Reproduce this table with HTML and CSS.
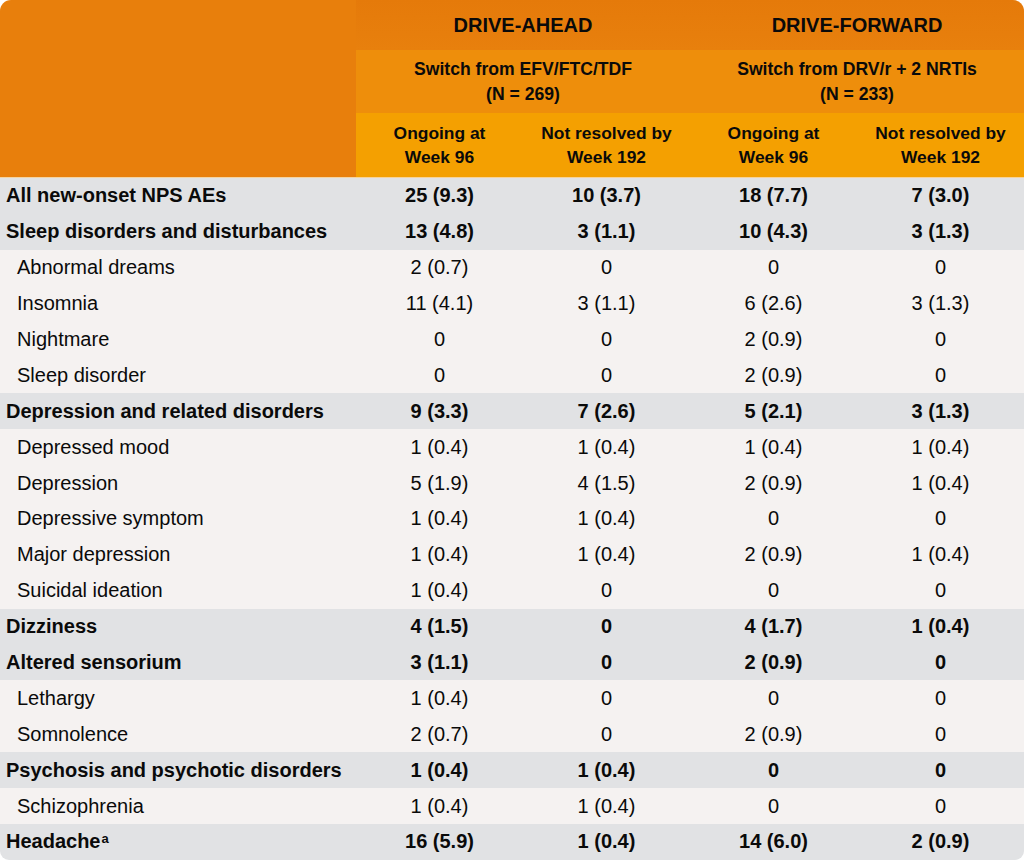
FILE: index.html
```html
<!DOCTYPE html>
<html lang="en">
<head>
<meta charset="utf-8">
<title>New-onset NPS AEs</title>
<link rel="stylesheet" href="styles.css">
</head>
<body>
<div class="wrap">
<table class="ae">
  <colgroup>
    <col class="c-label"><col class="c-num"><col class="c-num"><col class="c-num"><col class="c-num">
  </colgroup>
  <thead>
    <tr class="h1">
      <th class="corner" rowspan="3"></th>
      <th colspan="2">DRIVE-AHEAD</th>
      <th colspan="2">DRIVE-FORWARD</th>
    </tr>
    <tr class="h2">
      <th colspan="2">Switch from EFV/FTC/TDF<br>(N = 269)</th>
      <th colspan="2">Switch from DRV/r + 2 NRTIs<br>(N = 233)</th>
    </tr>
    <tr class="h3">
      <th>Ongoing at<br>Week 96</th>
      <th>Not resolved by<br>Week 192</th>
      <th>Ongoing at<br>Week 96</th>
      <th>Not resolved by<br>Week 192</th>
    </tr>
  </thead>
  <tbody>
    <tr class="cat"><td>All new-onset NPS AEs</td><td>25 (9.3)</td><td>10 (3.7)</td><td>18 (7.7)</td><td>7 (3.0)</td></tr>
    <tr class="cat"><td>Sleep disorders and disturbances</td><td>13 (4.8)</td><td>3 (1.1)</td><td>10 (4.3)</td><td>3 (1.3)</td></tr>
    <tr class="sub"><td>Abnormal dreams</td><td>2 (0.7)</td><td>0</td><td>0</td><td>0</td></tr>
    <tr class="sub"><td>Insomnia</td><td>11 (4.1)</td><td>3 (1.1)</td><td>6 (2.6)</td><td>3 (1.3)</td></tr>
    <tr class="sub"><td>Nightmare</td><td>0</td><td>0</td><td>2 (0.9)</td><td>0</td></tr>
    <tr class="sub"><td>Sleep disorder</td><td>0</td><td>0</td><td>2 (0.9)</td><td>0</td></tr>
    <tr class="cat"><td>Depression and related disorders</td><td>9 (3.3)</td><td>7 (2.6)</td><td>5 (2.1)</td><td>3 (1.3)</td></tr>
    <tr class="sub"><td>Depressed mood</td><td>1 (0.4)</td><td>1 (0.4)</td><td>1 (0.4)</td><td>1 (0.4)</td></tr>
    <tr class="sub"><td>Depression</td><td>5 (1.9)</td><td>4 (1.5)</td><td>2 (0.9)</td><td>1 (0.4)</td></tr>
    <tr class="sub"><td>Depressive symptom</td><td>1 (0.4)</td><td>1 (0.4)</td><td>0</td><td>0</td></tr>
    <tr class="sub"><td>Major depression</td><td>1 (0.4)</td><td>1 (0.4)</td><td>2 (0.9)</td><td>1 (0.4)</td></tr>
    <tr class="sub"><td>Suicidal ideation</td><td>1 (0.4)</td><td>0</td><td>0</td><td>0</td></tr>
    <tr class="cat"><td>Dizziness</td><td>4 (1.5)</td><td>0</td><td>4 (1.7)</td><td>1 (0.4)</td></tr>
    <tr class="cat"><td>Altered sensorium</td><td>3 (1.1)</td><td>0</td><td>2 (0.9)</td><td>0</td></tr>
    <tr class="sub"><td>Lethargy</td><td>1 (0.4)</td><td>0</td><td>0</td><td>0</td></tr>
    <tr class="sub"><td>Somnolence</td><td>2 (0.7)</td><td>0</td><td>2 (0.9)</td><td>0</td></tr>
    <tr class="cat"><td>Psychosis and psychotic disorders</td><td>1 (0.4)</td><td>1 (0.4)</td><td>0</td><td>0</td></tr>
    <tr class="sub"><td>Schizophrenia</td><td>1 (0.4)</td><td>1 (0.4)</td><td>0</td><td>0</td></tr>
    <tr class="cat"><td>Headache<sup>a</sup></td><td>16 (5.9)</td><td>1 (0.4)</td><td>14 (6.0)</td><td>2 (0.9)</td></tr>
  </tbody>
</table>
</div>
</body>
</html>
```
FILE: styles.css
```css
html, body {
  margin: 0;
  padding: 0;
  background: #ffffff;
}

.wrap {
  width: 1024px;
  height: 860px;
  overflow: hidden;
  border-radius: 11px 11px 9px 9px;
}

.ae {
  width: 1024px;
  border-collapse: collapse;
  table-layout: fixed;
  font-family: "Liberation Sans", Arial, sans-serif;
  color: #0a0a0a;
}

.c-label { width: 356px; }
.c-num { width: 167px; }

.ae th {
  font-weight: bold;
  text-align: center;
  padding: 0;
}

.corner {
  background: #e87f0c;
  border-bottom: 1px solid #f3d4a4;
}

.h1 th {
  height: 50px;
  font-size: 20px;
  background: linear-gradient(#e57a0a, #e8800d);
}

.h1 th.corner {
  background: #e87f0c;
}

.h2 th {
  height: 63px;
  font-size: 17.6px;
  line-height: 25px;
  background: #ee8e0b;
}

.h3 th {
  height: 64px;
  font-size: 17.4px;
  line-height: 24px;
  background: #f4a001;
  border-bottom: 1px solid #f6d39a;
}

.ae td {
  height: 35.9px;
  padding: 0;
  font-size: 20px;
  text-align: center;
  white-space: nowrap;
}

.ae td:first-child {
  text-align: left;
}

.cat td {
  background: #e1e2e4;
  font-weight: bold;
}

.cat td:first-child {
  padding-left: 6px;
}

.sub td {
  background: #f5f2f1;
}

.sub td:first-child {
  padding-left: 17px;
}

sup {
  font-size: 13px;
  line-height: 0;
  vertical-align: 5px;
  margin-left: 1px;
}
```
